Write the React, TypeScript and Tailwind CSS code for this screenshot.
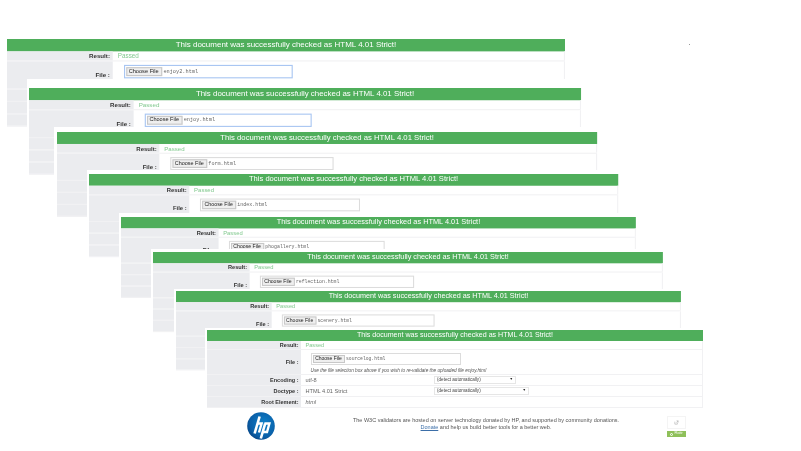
const panels = [
  { file: "enjoy2.html", wrap: "left-[7px] top-[39px] w-[559px] h-[87px]", scale: "scale-[1.125]", focus: true },
  { file: "enjoy.html", wrap: "left-[27px] top-[79px] w-[555px] h-[95px] pl-[2px] pt-[9px]", scale: "scale-[1.113]", focus: true },
  { file: "form.html", wrap: "left-[54px] top-[127px] w-[544px] h-[89px] pl-[3px] pt-[4.5px]", scale: "scale-[1.089]", focus: false },
  { file: "index.html", wrap: "left-[87px] top-[170px] w-[532px] h-[87px] pl-[2px] pt-[3.5px]", scale: "scale-[1.067]", focus: false },
  { file: "phogallery.html", wrap: "left-[119px] top-[213px] w-[518px] h-[85px] pl-[2px] pt-[4px]", scale: "scale-[1.038]", focus: false },
  { file: "reflection.html", wrap: "left-[151px] top-[249px] w-[513px] h-[83px] pl-[2px] pt-[3px]", scale: "scale-[1.028]", focus: false },
  { file: "scenery.html", wrap: "left-[174px] top-[289px] w-[508px] h-[81px] pl-[2px] pt-[2px]", scale: "scale-[1.018]", focus: false },
  { file: "sourcelog.html", wrap: "left-[205px] top-[328px] w-[498px] h-[80px] pl-[2px] pt-[2px]", scale: "scale-100", focus: false },
];

const sans = "font-['Liberation_Sans',Arial,sans-serif]";

function Row({ label, h, children }: { label: string; h: string; children: React.ReactNode }) {
  return (
    <div className={`flex ${h} border-b border-[#f1f1f3]`}>
      <div className="flex w-[94px] shrink-0 items-center justify-end bg-[#ebecef] pr-[2.5px] text-[5.5px] font-bold text-[#333]">
        {label}
      </div>
      <div className="min-w-0 flex-1 pl-[4.5px] text-[5.6px] text-[#666] border-r border-[#f1f1f3]">{children}</div>
    </div>
  );
}

function Select({ w }: { w: string }) {
  return (
    <div className={`flex h-[7.5px] ${w} items-center justify-between border border-[#e6e6e6] bg-white pl-[2px] pr-[2px] text-[4.6px] text-[#444]`}>
      <span>(detect automatically)</span>
      <span className="text-[3.5px] text-[#222]">▼</span>
    </div>
  );
}

function Panel({ p }: { p: (typeof panels)[number] }) {
  return (
    <div className={`absolute bg-white ${p.wrap}`}>
      <div className={`flex h-[77.5px] w-[496px] origin-top-left flex-col ${p.scale}`}>
        <div className="flex h-[10.5px] shrink-0 items-center justify-center bg-[#4fae5b] text-[7.1px] text-white">
          This document was successfully checked as HTML 4.01 Strict!
        </div>
        <Row label="Result:" h="h-[9.5px]">
          <div className="flex h-full items-center text-[#82c98f]">Passed</div>
        </Row>
        <Row label="File :" h="h-[25px]">
          <div className="flex flex-col">
            <div className={`ml-[5px] mt-[3px] flex h-[11.5px] w-[150px] items-center border bg-white pl-[1px] ${p.focus ? "border-[#a9c6f2]" : "border-[#dcdcdc]"}`}>
              <div className="flex h-[7.5px] w-[32px] items-center justify-center border border-[#c8c8c8] bg-[#efefef] text-[5px] text-[#222]">
                Choose File
              </div>
              <span className="ml-[1.5px] font-['Liberation_Mono',monospace] text-[4.7px] text-[#666]">{p.file}</span>
            </div>
            <div className="ml-[5px] mt-[2px] whitespace-nowrap text-[4.7px] italic text-[#555]">
              Use the file selection box above if you wish to re-validate the uploaded file enjoy.html
            </div>
          </div>
        </Row>
        <Row label="Encoding :" h="h-[11px]">
          <div className="flex h-full items-center">
            <span className="w-[128.5px] shrink-0">utf-8</span>
            <Select w="w-[82px]" />
          </div>
        </Row>
        <Row label="Doctype :" h="h-[11px]">
          <div className="flex h-full items-center">
            <span className="w-[128.5px] shrink-0">HTML 4.01 Strict</span>
            <Select w="w-[95px]" />
          </div>
        </Row>
        <Row label="Root Element:" h="h-[10.5px]">
          <div className="flex h-full items-center italic">html</div>
        </Row>
      </div>
    </div>
  );
}

function HpLogo() {
  return (
    <svg viewBox="0 0 28 28" className="h-[28px] w-[28px]">
      <defs>
        <radialGradient id="hpg" cx="0.6" cy="0.4" r="0.7">
          <stop offset="0" stopColor="#0e80c8" />
          <stop offset="0.7" stopColor="#0a5fa8" />
          <stop offset="1" stopColor="#06407e" />
        </radialGradient>
      </defs>
      <circle cx="14" cy="14" r="13.8" fill="url(#hpg)" />
      <path d="M12.6 4.5 L7.6 21.5" stroke="#fff" strokeWidth="2.6" fill="none" />
      <path d="M10.5 11.5 H14.6 L12 20.5" stroke="#fff" strokeWidth="2.4" fill="none" />
      <path d="M18.2 11.5 L13.8 26.5" stroke="#fff" strokeWidth="2.6" fill="none" />
      <path d="M17.4 11.5 H22.4 L20 20 H15.5" stroke="#fff" strokeWidth="2.4" fill="none" />
    </svg>
  );
}

export default function App() {
  return (
    <div className={`relative h-[451px] w-[801px] overflow-hidden bg-white blur-[0.45px] ${sans}`}>
      <div className="absolute left-[689px] top-[44px] h-[1px] w-[1px] bg-[#999]" />
      {panels.map((p) => (
        <Panel key={p.file} p={p} />
      ))}
      <div className="absolute left-[247px] top-[412px]">
        <HpLogo />
      </div>
      <div className="absolute left-[336px] top-[417px] w-[300px] text-center text-[5.5px] leading-[7px] text-[#555]">
        <div>The W3C validators are hosted on server technology donated by HP, and supported by community donations.</div>
        <div>
          <span className="text-[#3b6ea8] underline">Donate</span> and help us build better tools for a better web.
        </div>
      </div>
      <div className="absolute left-[667px] top-[416px] flex w-[19px] flex-col items-stretch gap-[2px]">
        <div className="flex h-[13px] items-center justify-center border border-[#f4f4f4] bg-white">
          <svg viewBox="0 0 6 6" className="h-[5px] w-[5px]" fill="none" stroke="#aaa" strokeWidth="0.7">
            <path d="M1 2 V5 H4 V3" />
            <path d="M3 1 H5 V3 M5 1 L3 3" />
          </svg>
        </div>
        <div className="flex h-[6px] items-center justify-center gap-[1px] bg-[#8fc05a] text-[3.6px] text-white">
          <span className="h-[3px] w-[3px] rounded-full border-[0.5px] border-white" />
          <span>Flattr</span>
        </div>
      </div>
    </div>
  );
}
